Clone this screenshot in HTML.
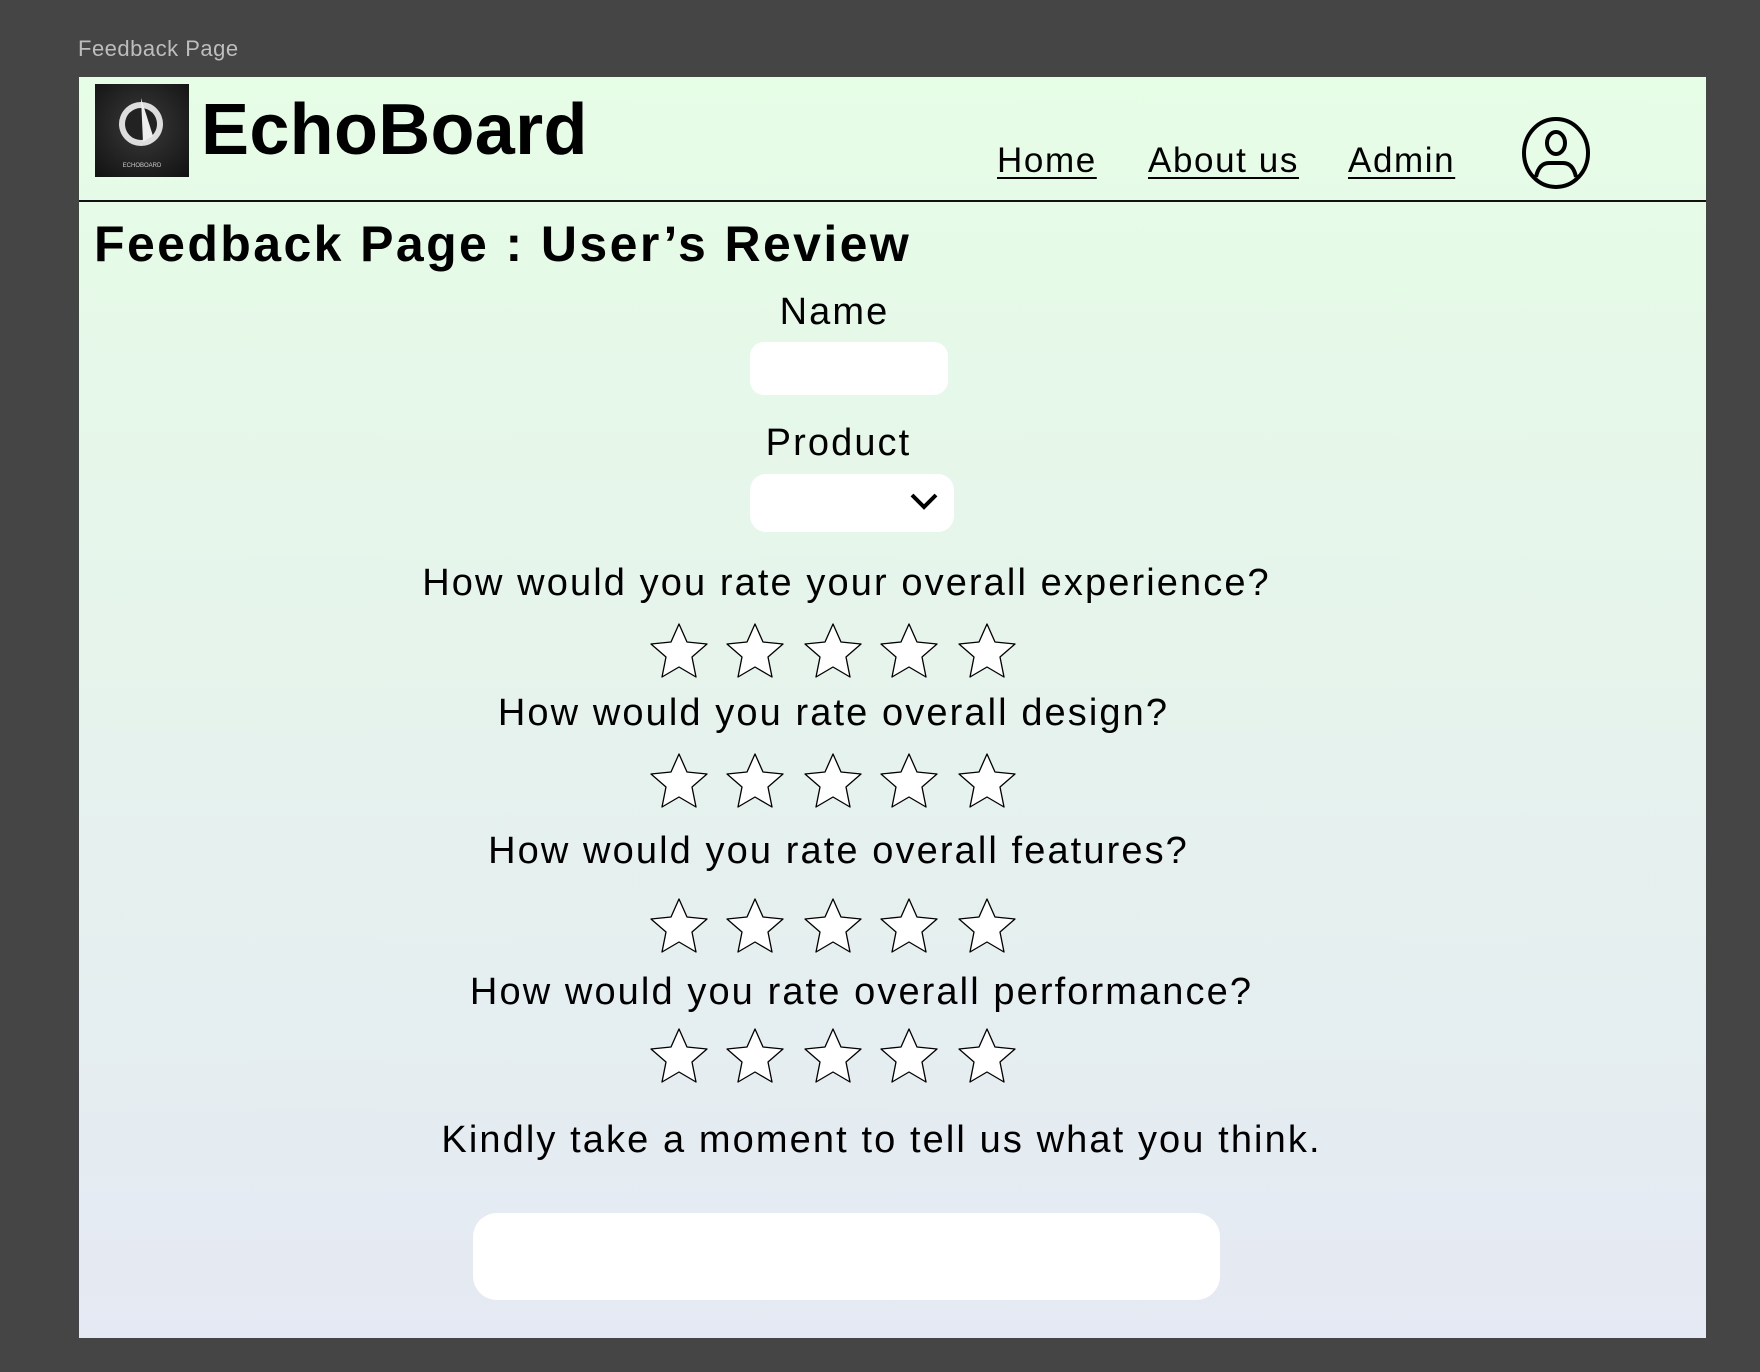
<!DOCTYPE html>
<html><head><meta charset="utf-8"><style>
*{margin:0;padding:0;box-sizing:border-box}
body{width:1760px;height:1372px;background:#454545;position:relative;overflow:hidden;font-family:"Liberation Sans",sans-serif;color:#000}
.lbl{position:absolute;left:78px;top:36px;font-size:22px;color:#bdbdbd;letter-spacing:0.5px}
.panel{position:absolute;left:79px;top:77px;width:1627px;height:1261px;background:linear-gradient(#e6fde6,#e5e9f3)}
.a{position:absolute;white-space:nowrap}
.c{position:absolute;left:0;width:100%;text-align:center;font-size:38px;letter-spacing:2.1px;white-space:nowrap}
.nav{font-size:35px;letter-spacing:1.6px;text-decoration:underline;text-underline-offset:5px;text-decoration-thickness:2px}
.box{position:absolute;background:#fff}
</style></head><body>
<div class="lbl">Feedback Page</div>
<div class="panel">
 <div class="a" style="left:16px;top:7px;width:94px;height:93px;background:radial-gradient(circle at 50% 45%,#3a3a3a,#111)">
  <svg width="94" height="93" viewBox="0 0 94 93"><circle cx="46" cy="40" r="22" fill="#ddd"/><circle cx="46" cy="40" r="16" fill="#222"/><path d="M46 14 L48 58 L58 52 Z" fill="#eee"/><text x="47" y="83" font-size="6" fill="#ccc" text-anchor="middle" font-family="Liberation Sans">ECHOBOARD</text></svg>
 </div>
 <div class="a" style="left:122px;top:12px;font-size:72px;font-weight:bold;letter-spacing:0.3px">EchoBoard</div>
 <div class="a nav" style="left:918px;top:64px">Home</div>
 <div class="a nav" style="left:1069px;top:64px">About us</div>
 <div class="a nav" style="left:1269px;top:64px">Admin</div>
 <svg class="a" style="left:1440px;top:38px" width="74" height="76" viewBox="0 0 74 76"><ellipse cx="37" cy="38" rx="32" ry="34" fill="none" stroke="#000" stroke-width="4"/><ellipse cx="37" cy="28" rx="9" ry="11" fill="none" stroke="#000" stroke-width="4"/><path d="M17 62 Q20 48 30 48 L44 48 Q54 48 57 62" fill="none" stroke="#000" stroke-width="4"/></svg>
 <div class="a" style="left:0;top:123px;width:1627px;height:2px;background:#111"></div>
 <div class="a" style="left:15px;top:138px;font-size:50px;font-weight:bold;letter-spacing:2.4px">Feedback Page : User’s Review</div>
 <div class="c" style="top:214px;left:-58px">Name</div>
 <div class="box" style="left:671px;top:265px;width:198px;height:53px;border-radius:14px"></div>
 <div class="c" style="top:345px;left:-54px">Product</div>
 <div class="box" style="left:671px;top:397px;width:204px;height:58px;border-radius:16px"></div>
 <svg class="a" style="left:830px;top:414px" width="30" height="20"><path d="M3 4 L15 16 L27 4" fill="none" stroke="#000" stroke-width="4"/></svg>
 <div class="c" style="top:485px;left:-46px">How would you rate your overall experience?</div>
 <div class="c" style="top:615px;left:-59px">How would you rate overall design?</div>
 <div class="c" style="top:753px;left:-54px">How would you rate overall features?</div>
 <div class="c" style="top:894px;left:-31px">How would you rate overall performance?</div>
 <div class="c" style="top:1042px;left:-11px">Kindly take a moment to tell us what you think.</div>
 <div class="box" style="left:394px;top:1136px;width:747px;height:87px;border-radius:24px"></div>
 <svg class="a" style="left:0;top:0" width="1627" height="1261">
  <defs><path id="s" d="M0 -28 L8 -10 L28 -8 L13 5 L17 25 L0 15 L-17 25 L-13 5 L-28 -8 L-8 -10 Z" fill="#fff" stroke="#000" stroke-width="1.3" stroke-linejoin="round"/></defs>
  <g id="r1"><use href="#s" x="600" y="575"/><use href="#s" x="676" y="575"/><use href="#s" x="754" y="575"/><use href="#s" x="830" y="575"/><use href="#s" x="908" y="575"/></g>
  <use href="#r1" y="130"/><use href="#r1" y="275"/><use href="#r1" y="405"/>
 </svg>
</div>
</body></html>
